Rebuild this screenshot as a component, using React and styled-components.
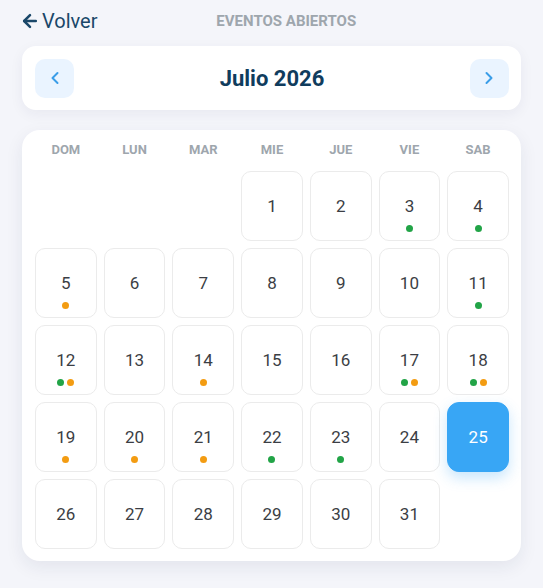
import React, { useState } from 'react';
import styled, { createGlobalStyle } from 'styled-components';
import { ArrowLeft, ChevronLeft, ChevronRight } from 'lucide-react';

const GlobalStyle = createGlobalStyle`
  body {
    margin: 0;
    background: #f4f5fa;
    font-family: Roboto, "Liberation Sans", sans-serif;
  }
`;

const Page = styled.div`
  padding: 10px 22px 20px;
  display: flex;
  flex-direction: column;
  gap: 14px;
`;

const TopBar = styled.div`
  display: flex;
  align-items: center;
  justify-content: space-between;
  height: 22px;
`;

const BackLink = styled.button`
  display: flex;
  align-items: center;
  gap: 2px;
  margin-left: -2px;
  padding: 0;
  border: none;
  background: none;
  color: #1a4769;
  font-family: inherit;
  font-size: 20px;
  cursor: pointer;
`;

const PageTitle = styled.div`
  font-size: 15px;
  font-weight: 700;
  color: #9ea6ad;
  text-transform: uppercase;
`;

const Spacer = styled.span`
  width: 46px;
`;

const MonthCard = styled.div`
  height: 64px;
  background: #fff;
  border-radius: 14px;
  box-shadow: 0 4px 14px rgba(30, 40, 80, 0.06);
  display: flex;
  align-items: center;
  justify-content: space-between;
  padding: 0 12px 0 13px;
`;

const NavButton = styled.button`
  width: 39px;
  height: 39px;
  border: none;
  border-radius: 10px;
  background: #eaf4ff;
  color: #3a9de8;
  display: flex;
  align-items: center;
  justify-content: center;
  padding: 0;
  cursor: pointer;
`;

const MonthTitle = styled.h2`
  margin: 0;
  font-size: 22px;
  font-weight: 700;
  color: #103c5d;
`;

const CalendarCard = styled.div`
  margin-top: 6px;
  background: #fff;
  border-radius: 18px;
  box-shadow: 0 6px 18px rgba(30, 40, 80, 0.08);
  padding: 12px 12px 12px 13px;
`;

const WeekHeader = styled.div`
  display: grid;
  grid-template-columns: repeat(7, 1fr);
  gap: 7px;
  margin-bottom: 13px;
`;

const WeekDay = styled.div`
  text-align: center;
  font-size: 13px;
  font-weight: 700;
  color: #9ea6ad;
  height: 16px;
  line-height: 16px;
`;

const Grid = styled.div`
  display: grid;
  grid-template-columns: repeat(7, 1fr);
  grid-auto-rows: 70px;
  gap: 7px;
`;

const DayCell = styled.button`
  position: relative;
  border: 1px solid ${(p) => (p.$selected ? '#38a6f5' : '#ebebeb')};
  border-radius: ${(p) => (p.$selected ? '12px' : '10px')};
  background: ${(p) => (p.$selected ? '#38a6f5' : '#fff')};
  color: ${(p) => (p.$selected ? '#fff' : '#3b3e44')};
  box-shadow: ${(p) => (p.$selected ? '0 6px 14px rgba(56, 166, 245, 0.28)' : 'none')};
  font-family: inherit;
  font-size: 17px;
  display: flex;
  align-items: center;
  justify-content: center;
  padding: 0;
  cursor: pointer;
`;

const Dots = styled.div`
  position: absolute;
  left: 0;
  right: 0;
  bottom: 8px;
  display: flex;
  justify-content: center;
  gap: 3px;
`;

const Dot = styled.span`
  width: 7px;
  height: 7px;
  border-radius: 50%;
  background: ${(p) => (p.$kind === 'green' ? '#22a447' : '#f39c12')};
`;

const weekDays = ['DOM', 'LUN', 'MAR', 'MIE', 'JUE', 'VIE', 'SAB'];

const events = {
  3: ['green'],
  4: ['green'],
  5: ['orange'],
  11: ['green'],
  12: ['green', 'orange'],
  14: ['orange'],
  17: ['green', 'orange'],
  18: ['green', 'orange'],
  19: ['orange'],
  20: ['orange'],
  21: ['orange'],
  22: ['green'],
  23: ['green'],
};

export default function App() {
  const [selected, setSelected] = useState(25);

  // julio 2026 empieza en miércoles
  const blanks = 3;
  const days = Array.from({ length: 31 }, (_, i) => i + 1);

  return (
    <Page>
      <GlobalStyle />
      <TopBar>
        <BackLink>
          <ArrowLeft size={20} strokeWidth={3} />
          Volver
        </BackLink>
        <PageTitle>Eventos abiertos</PageTitle>
        <Spacer />
      </TopBar>

      <MonthCard>
        <NavButton>
          <ChevronLeft size={20} strokeWidth={2.4} />
        </NavButton>
        <MonthTitle>Julio 2026</MonthTitle>
        <NavButton>
          <ChevronRight size={20} strokeWidth={2.4} />
        </NavButton>
      </MonthCard>

      <CalendarCard>
        <WeekHeader>
          {weekDays.map((d) => (
            <WeekDay key={d}>{d}</WeekDay>
          ))}
        </WeekHeader>
        <Grid>
          {Array.from({ length: blanks }, (_, i) => (
            <span key={'b' + i} />
          ))}
          {days.map((d) => (
            <DayCell key={d} $selected={d === selected} onClick={() => setSelected(d)}>
              {d}
              {events[d] && d !== selected && (
                <Dots>
                  {events[d].map((k, i) => (
                    <Dot key={i} $kind={k} />
                  ))}
                </Dots>
              )}
            </DayCell>
          ))}
        </Grid>
      </CalendarCard>
    </Page>
  );
}
